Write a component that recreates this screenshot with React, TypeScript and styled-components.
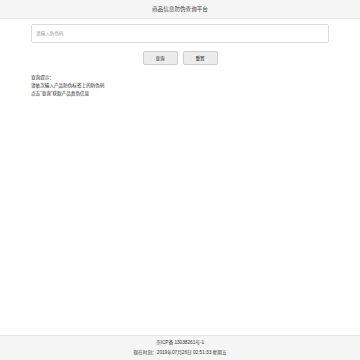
import styled, { createGlobalStyle } from 'styled-components';
import { useState } from 'react';

const GlobalStyle = createGlobalStyle`
  html, body {
    margin: 0;
    padding: 0;
    background: #fff;
    font-family: 'Liberation Sans', 'Noto Sans CJK SC', sans-serif;
    color: #333;
  }
  * {
    box-sizing: border-box;
  }
`;

/** 防伪查询页面 */
const App = () => {
  const [code, setCode] = useState<string>('');

  return (
    <PageS>
      <GlobalStyle />
      <HeaderS>商品信息防伪查询平台</HeaderS>
      <MainS>
        <CodeInputS
          value={code}
          placeholder='请输入防伪码'
          onChange={(e) => setCode(e.target.value)}
        />
        <ButtonRowS>
          <ButtonS>查询</ButtonS>
          <ButtonS onClick={() => setCode('')}>重置</ButtonS>
        </ButtonRowS>
        <HintS>
          <p>查询提示：</p>
          <p>请依次输入产品防伪标签上的防伪码</p>
          <p>点击“查询”获取产品真伪信息</p>
        </HintS>
      </MainS>
      <FooterS>
        <p>京ICP备 13038261号-1</p>
        <p>现在时刻：2019年07月26日 02:51:33 星期五</p>
      </FooterS>
    </PageS>
  );
};

export default App;

const PageS = styled.div`
  display: flex;
  flex-direction: column;
  min-height: 100vh;
`;

const HeaderS = styled.header`
  height: 19px;
  display: flex;
  align-items: center;
  justify-content: center;
  background-color: #f5f5f5;
  border-bottom: 1px solid #e6e6e6;
  font-size: 5.6px;
  color: #444;
`;

const MainS = styled.main`
  flex: 1;
  display: flex;
  flex-direction: column;
  padding: 5px 31px 0;
`;

const CodeInputS = styled.input`
  width: 100%;
  height: 19px;
  padding: 0 4px;
  border: 1px solid #dcdcdc;
  border-radius: 2px;
  outline: none;
  font-family: inherit;
  font-size: 4.6px;
  color: #333;
  &::placeholder {
    color: #999;
  }
`;

const ButtonRowS = styled.div`
  display: flex;
  justify-content: center;
  gap: 5px;
  margin-top: 8px;
`;

const ButtonS = styled.button`
  width: 35px;
  height: 14px;
  padding: 0;
  background-color: #ececec;
  border: 1px solid #cfcfcf;
  border-radius: 2px;
  font-family: inherit;
  font-size: 4.6px;
  color: #222;
`;

const HintS = styled.div`
  margin-top: 9px;
  font-size: 4.6px;
  line-height: 8px;
  color: #222;
  p {
    margin: 0;
  }
`;

const FooterS = styled.footer`
  height: 25px;
  display: flex;
  flex-direction: column;
  align-items: center;
  justify-content: center;
  gap: 2px;
  background-color: #f5f5f5;
  border-top: 1px solid #e6e6e6;
  font-size: 4.7px;
  line-height: 8px;
  color: #333;
  p {
    margin: 0;
  }
`;
